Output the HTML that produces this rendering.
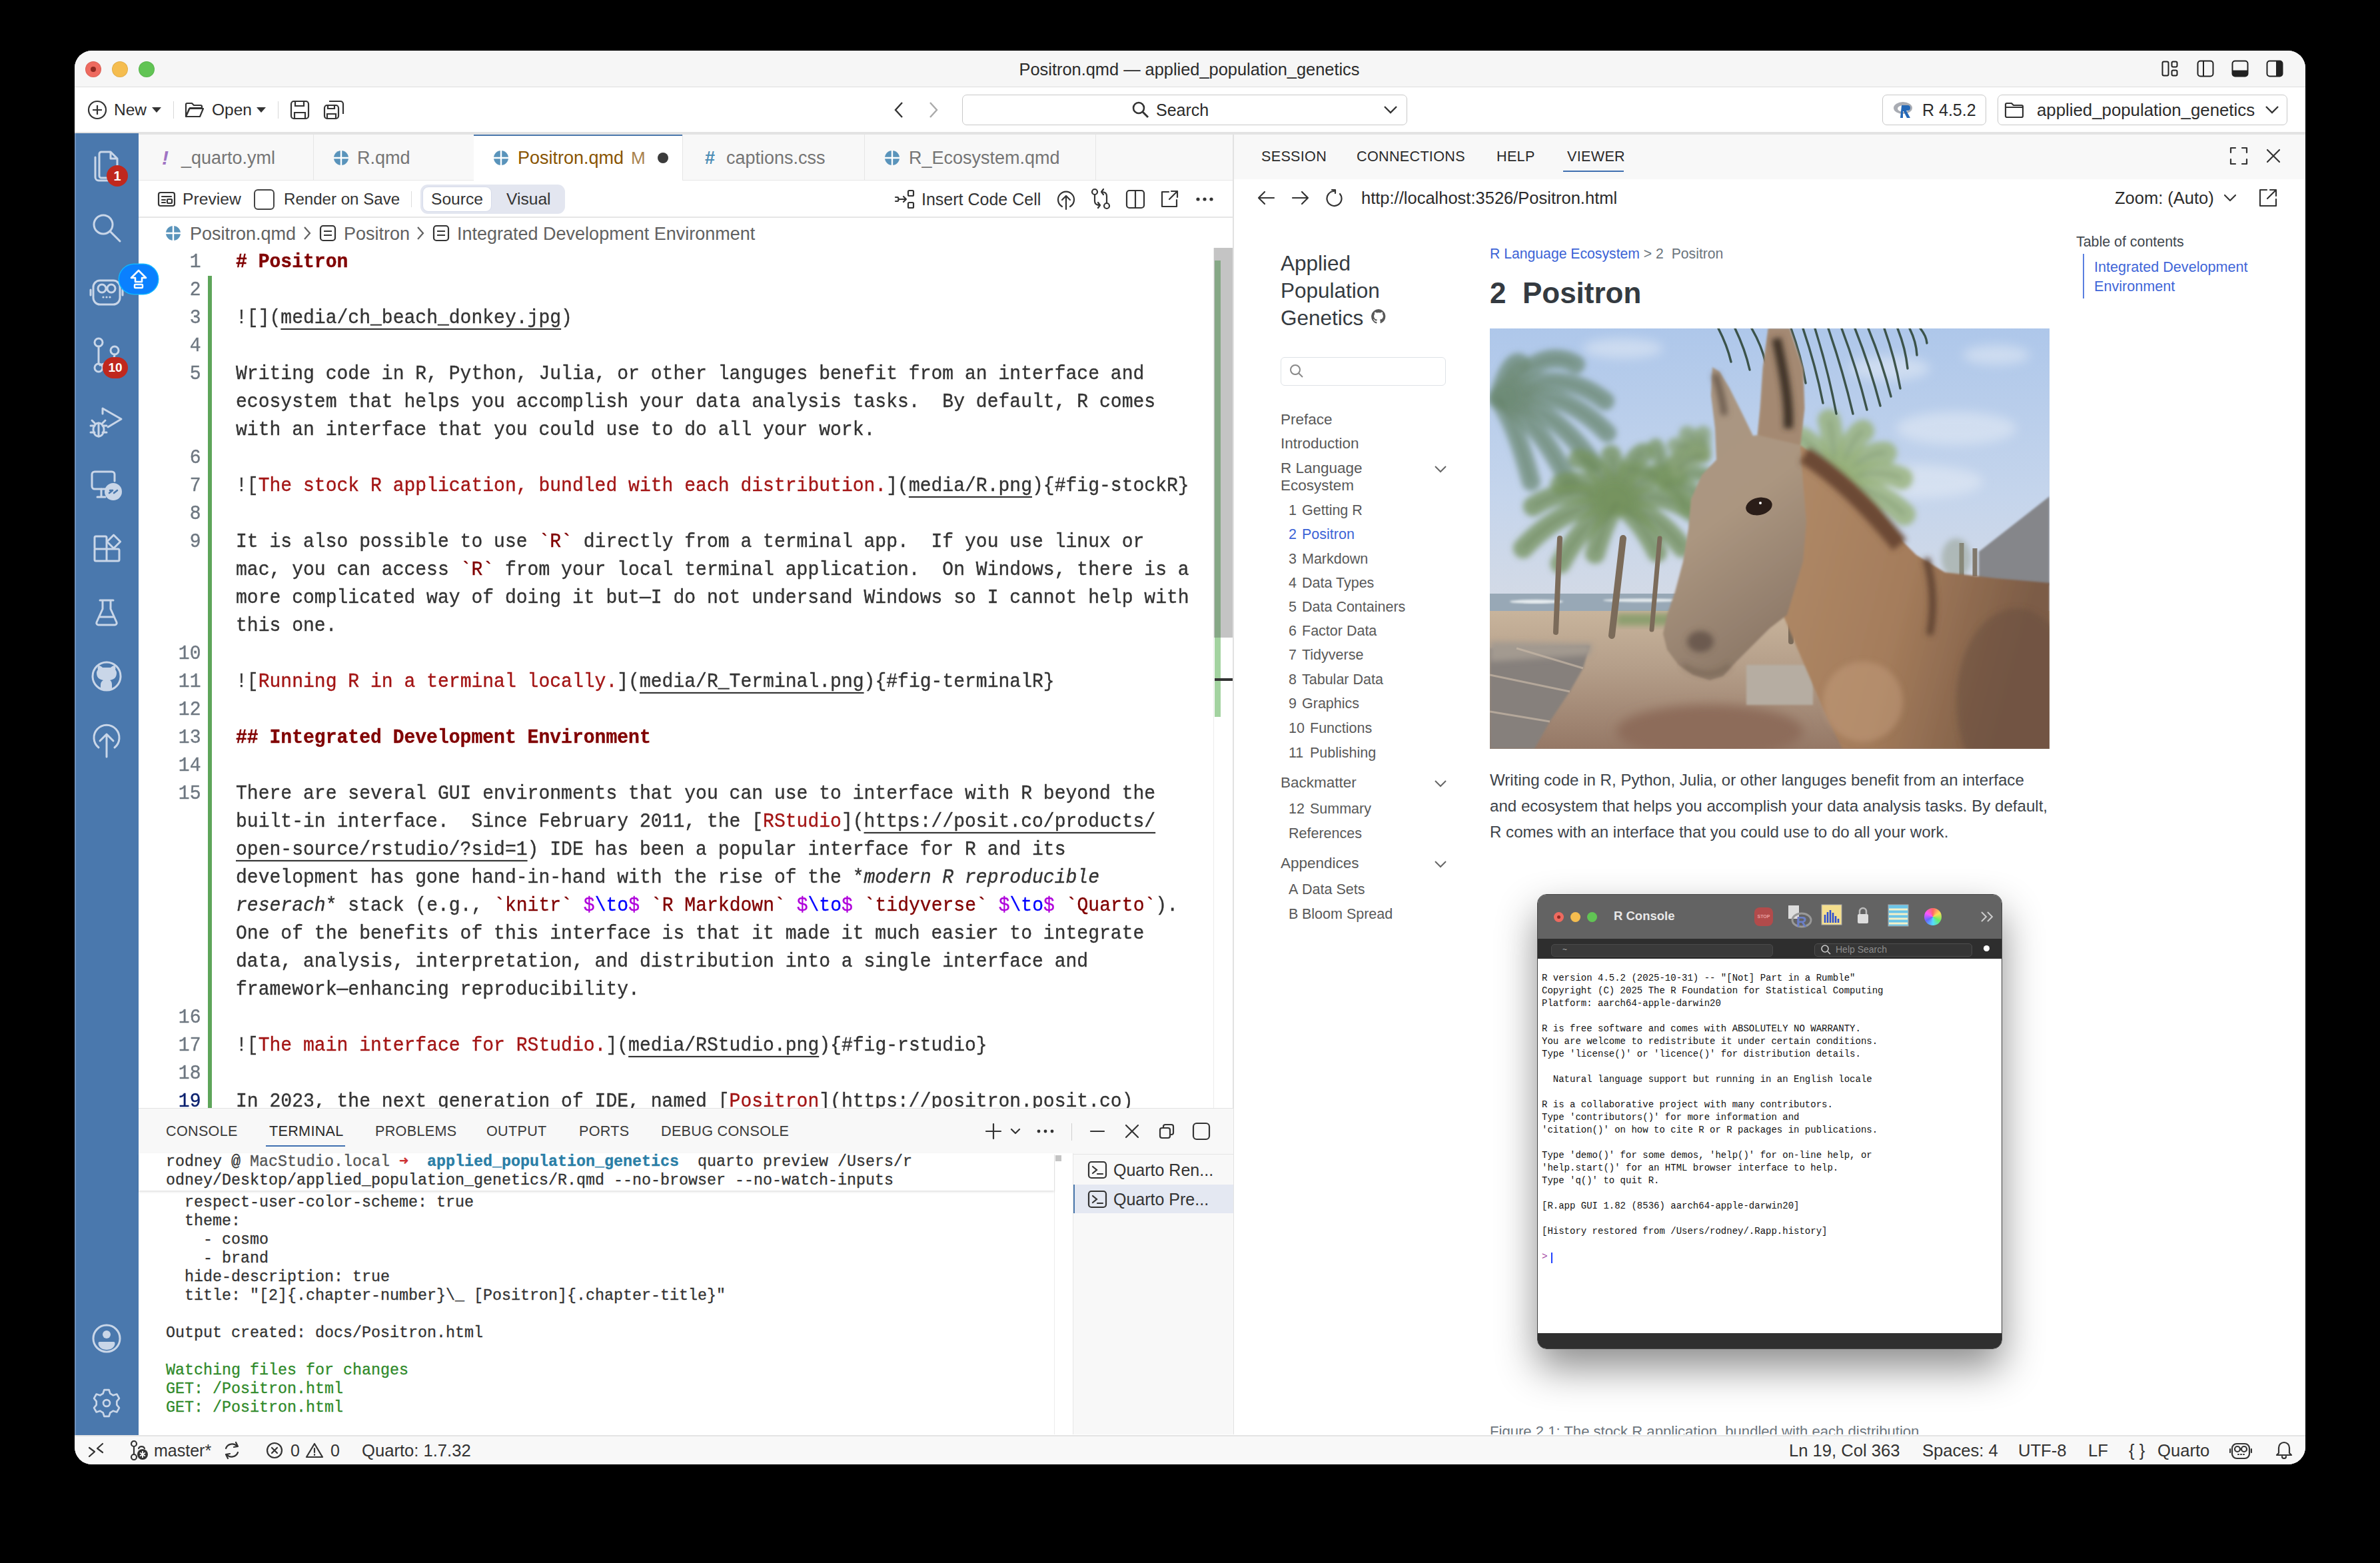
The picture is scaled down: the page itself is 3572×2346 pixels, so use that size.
<!DOCTYPE html>
<html><head><meta charset="utf-8"><title>Positron</title><style>
*{box-sizing:content-box}
html,body{margin:0;padding:0;background:#000;width:3572px;height:2346px;overflow:hidden}
.a{position:absolute}
.t{position:absolute;white-space:pre;font-family:'Liberation Sans',sans-serif}
#win{position:absolute;left:112px;top:76px;width:3348px;height:2122px;border-radius:26px;overflow:hidden;background:#fff}
#inner{position:absolute;left:-112px;top:-76px;width:3572px;height:2346px}
.code{position:absolute;white-space:pre;font-family:'Liberation Mono',monospace;font-size:28.05px;line-height:37px;color:#333;transform-origin:0 60%;transform:scaleY(1.08);-webkit-text-stroke:0.35px currentColor}
.ln{left:0;width:93.5px;text-align:right}
.term{position:absolute;white-space:pre;font-family:'Liberation Mono',monospace;font-size:23.33px;line-height:28px;color:#333;-webkit-text-stroke:0.3px currentColor}
</style></head>
<body><div id="win"><div id="inner"><div class="a" style="left:112px;top:76px;width:3348px;height:55px;background:#f6f6f6;"></div><div class="a" style="left:112px;top:130px;width:3348px;height:1px;background:#dedede;"></div><div class="a" style="left:128px;top:92px;width:24px;height:24px;border-radius:50%;background:#ee6a5f;box-shadow:inset 0 0 0 1px rgba(0,0,0,0.08)"></div><div class="a" style="left:168px;top:92px;width:24px;height:24px;border-radius:50%;background:#f5bd4f;box-shadow:inset 0 0 0 1px rgba(0,0,0,0.08)"></div><div class="a" style="left:208px;top:92px;width:24px;height:24px;border-radius:50%;background:#61c454;box-shadow:inset 0 0 0 1px rgba(0,0,0,0.08)"></div><div class="a" style="left:136px;top:100px;width:8px;height:8px;border-radius:50%;background:#8f2a22"></div><div class="t" style="left:1335.0px;width:900px;text-align:center;top:84.0px;line-height:40px;font-size:25.4px;color:#2b2b2b;font-weight:400;">Positron.qmd — applied_population_genetics</div><svg class="a" style="left:3244.0px;top:90.0px;" width="26" height="26" viewBox="0 0 26 26" fill="none"><rect x="1.5" y="2.5" width="9" height="21" rx="2.2" stroke="#222" stroke-width="2"/><rect x="15.5" y="2.5" width="8" height="8" rx="2" stroke="#222" stroke-width="2"/><rect x="15.5" y="15.5" width="8" height="8" rx="2" stroke="#222" stroke-width="2"/></svg><svg class="a" style="left:3296.5px;top:90.0px;" width="26" height="26" viewBox="0 0 26 26" fill="none"><rect x="1.5" y="1.5" width="23" height="23" rx="4" stroke="#222" stroke-width="2"/><line x1="10" y1="1.5" x2="10" y2="24.5" stroke="#222" stroke-width="2"/></svg><svg class="a" style="left:3349.0px;top:90.0px;" width="26" height="26" viewBox="0 0 26 26" fill="none"><rect x="1.5" y="1.5" width="23" height="23" rx="4" stroke="#222" stroke-width="2"/><path d="M1.5 15.5h23v5a4 4 0 0 1-4 4h-15a4 4 0 0 1-4-4z" fill="#222"/></svg><svg class="a" style="left:3401.0px;top:90.0px;" width="26" height="26" viewBox="0 0 26 26" fill="none"><rect x="1.5" y="1.5" width="23" height="23" rx="4" stroke="#222" stroke-width="2"/><path d="M15 1.5h5.5a4 4 0 0 1 4 4v15a4 4 0 0 1-4 4H15z" fill="#222"/></svg><div class="a" style="left:112px;top:131px;width:3348px;height:67px;background:#ffffff;"></div><div class="a" style="left:112px;top:198px;width:3348px;height:4px;background:#e3e3e3;"></div><svg class="a" style="left:131.0px;top:150.0px;" width="30" height="30" viewBox="0 0 30 30" fill="none"><circle cx="15" cy="15" r="13" stroke="#333" stroke-width="2.2"/><path d="M15 8v14M8 15h14" stroke="#333" stroke-width="2.2"/></svg><div class="t" style="left:171px;top:145.0px;line-height:40px;font-size:24.5px;color:#2b2b2b;font-weight:400;font-family:'Liberation Sans',sans-serif;">New</div><svg class="a" style="left:228.0px;top:161.0px;" width="14" height="8" viewBox="0 0 14 8" fill="none"><path d="M0 0h14L7 8z" fill="#333"/></svg><div class="a" style="left:260px;top:152px;width:1px;height:26px;background:#d8d8d8;"></div><svg class="a" style="left:277.0px;top:152.0px;" width="30" height="26" viewBox="0 0 30 26" fill="none"><path d="M2 5a2 2 0 0 1 2-2h7l3 3h10a2 2 0 0 1 2 2v2H8L2 23z M2 23l5-12h21l-5 12z" stroke="#333" stroke-width="2.2" stroke-linejoin="round"/></svg><div class="t" style="left:318px;top:145.0px;line-height:40px;font-size:24.5px;color:#2b2b2b;font-weight:400;font-family:'Liberation Sans',sans-serif;">Open</div><svg class="a" style="left:385.0px;top:161.0px;" width="14" height="8" viewBox="0 0 14 8" fill="none"><path d="M0 0h14L7 8z" fill="#333"/></svg><div class="a" style="left:417px;top:152px;width:1px;height:26px;background:#d8d8d8;"></div><svg class="a" style="left:435.0px;top:150.0px;" width="30" height="30" viewBox="0 0 30 30" fill="none"><rect x="2" y="2" width="26" height="26" rx="4" stroke="#333" stroke-width="2.2"/><path d="M8 2v7h13V2M7 28v-9h16v9" stroke="#333" stroke-width="2.2"/></svg><svg class="a" style="left:485.0px;top:150.0px;" width="32" height="30" viewBox="0 0 32 30" fill="none"><rect x="2" y="8" width="21" height="20" rx="4" stroke="#333" stroke-width="2.2"/><path d="M7 8v5h10V8M6 28v-7h13v7M9 2h17a4 4 0 0 1 4 4v15" stroke="#333" stroke-width="2.2"/></svg><svg class="a" style="left:1341.0px;top:152.0px;" width="16" height="26" viewBox="0 0 16 26" fill="none"><path d="M13 2L3 13l10 11" stroke="#333" stroke-width="2.4"/></svg><svg class="a" style="left:1393.0px;top:152.0px;" width="16" height="26" viewBox="0 0 16 26" fill="none"><path d="M3 2l10 11L3 24" stroke="#aaa" stroke-width="2.4"/></svg><div class="a" style="left:1444px;top:142px;width:666px;height:44px;border:1.5px solid #c8c8c8;border-radius:7px;background:#fff"></div><svg class="a" style="left:1699.0px;top:152.0px;" width="26" height="26" viewBox="0 0 26 26" fill="none"><circle cx="10" cy="10" r="8" stroke="#333" stroke-width="2.6"/><path d="M16 16l8 8" stroke="#333" stroke-width="3"/></svg><div class="t" style="left:1735px;top:145.0px;line-height:40px;font-size:25px;color:#2b2b2b;font-weight:400;font-family:'Liberation Sans',sans-serif;">Search</div><svg class="a" style="left:2076.0px;top:158.0px;" width="22" height="14" viewBox="0 0 22 14" fill="none"><path d="M2 2l9 9 9-9" stroke="#333" stroke-width="2.4"/></svg><div class="a" style="left:2825px;top:142px;width:154px;height:44px;border:1.5px solid #c8c8c8;border-radius:7px;background:#fff"></div><svg class="a" style="left:2841.0px;top:151.0px;" width="34" height="28" viewBox="0 0 34 28" fill="none"><ellipse cx="15" cy="11" rx="14" ry="9" fill="#a9acb3"/><ellipse cx="16" cy="12" rx="9" ry="5" fill="#fff"/><path d="M13 7h9a4 4 0 0 1 0 8h-2l6 11h-5l-5-10h-1v10h-4z" fill="#2468b7"/></svg><div class="t" style="left:2885px;top:145.0px;line-height:40px;font-size:25px;color:#2b2b2b;font-weight:400;font-family:'Liberation Sans',sans-serif;">R 4.5.2</div><div class="a" style="left:2998px;top:142px;width:433px;height:44px;border:1.5px solid #c8c8c8;border-radius:7px;background:#fff"></div><svg class="a" style="left:3008.0px;top:152.0px;" width="30" height="26" viewBox="0 0 30 26" fill="none"><path d="M2 5a2 2 0 0 1 2-2h7l3 3h12a2 2 0 0 1 2 2v14a2 2 0 0 1-2 2H4a2 2 0 0 1-2-2z M2 9h26" stroke="#333" stroke-width="2.2" stroke-linejoin="round"/></svg><div class="t" style="left:3057px;top:145.0px;line-height:40px;font-size:25.8px;color:#2b2b2b;font-weight:400;font-family:'Liberation Sans',sans-serif;">applied_population_genetics</div><svg class="a" style="left:3399.0px;top:158.0px;" width="22" height="14" viewBox="0 0 22 14" fill="none"><path d="M2 2l9 9 9-9" stroke="#333" stroke-width="2.4"/></svg><div class="a" style="left:112px;top:200px;width:96px;height:1954px;background:#4a78ad;"></div><div class="a" style="left:112px;top:200px;width:2px;height:1954px;background:#6f93c0;"></div><svg class="a" style="left:136.0px;top:220.0px;" width="48" height="56" viewBox="0 0 48 56" fill="none"><path d="M16 8h14l10 10v26a3 3 0 0 1-3 3H16a3 3 0 0 1-3-3V11a3 3 0 0 1 3-3z M30 8v10h10" stroke="#c9d6e8" stroke-width="3" stroke-linecap="round" stroke-linejoin="round"/><path d="M7 16v30a5 5 0 0 0 5 5h22" stroke="#c9d6e8" stroke-width="3" stroke-linecap="round" stroke-linejoin="round"/></svg><div class="a" style="left:160px;top:248px;width:32px;height:32px;border-radius:50%;background:#c0281e;color:#fff;font:700 20px/32px 'Liberation Sans';text-align:center">1</div><svg class="a" style="left:136.0px;top:318.0px;" width="48" height="48" viewBox="0 0 48 48" fill="none"><circle cx="19" cy="19" r="14" stroke="#c9d6e8" stroke-width="3" stroke-linecap="round" stroke-linejoin="round"/><path d="M29 29l15 15" stroke="#c9d6e8" stroke-width="3" stroke-linecap="round" stroke-linejoin="round"/></svg><svg class="a" style="left:133.0px;top:415.0px;" width="54" height="46" viewBox="0 0 54 46" fill="none"><rect x="7" y="6" width="40" height="36" rx="10" stroke="#c9d6e8" stroke-width="3" stroke-linecap="round" stroke-linejoin="round"/><circle cx="20" cy="18" r="6" stroke="#c9d6e8" stroke-width="3" stroke-linecap="round" stroke-linejoin="round"/><circle cx="34" cy="18" r="6" stroke="#c9d6e8" stroke-width="3" stroke-linecap="round" stroke-linejoin="round"/><path d="M3 20v8M51 20v8" stroke="#c9d6e8" stroke-width="3" stroke-linecap="round" stroke-linejoin="round"/><circle cx="22" cy="31" r="1.6" fill="#c9d6e8"/><circle cx="27" cy="31" r="1.6" fill="#c9d6e8"/><circle cx="32" cy="31" r="1.6" fill="#c9d6e8"/></svg><svg class="a" style="left:136.0px;top:506.0px;" width="48" height="56" viewBox="0 0 48 56" fill="none"><circle cx="12" cy="8" r="6" stroke="#c9d6e8" stroke-width="3" stroke-linecap="round" stroke-linejoin="round"/><circle cx="36" cy="20" r="6" stroke="#c9d6e8" stroke-width="3" stroke-linecap="round" stroke-linejoin="round"/><circle cx="12" cy="46" r="6" stroke="#c9d6e8" stroke-width="3" stroke-linecap="round" stroke-linejoin="round"/><path d="M12 14v26M36 26c0 10-10 12-22 16" stroke="#c9d6e8" stroke-width="3" stroke-linecap="round" stroke-linejoin="round"/></svg><div class="a" style="left:154px;top:536px;width:38px;height:32px;border-radius:16px;background:#c0281e;color:#fff;font:700 19px/32px 'Liberation Sans';text-align:center">10</div><svg class="a" style="left:132.0px;top:607.0px;" width="56" height="56" viewBox="0 0 56 56" fill="none"><path d="M22 14V6l28 16-20 12" stroke="#c9d6e8" stroke-width="3" stroke-linecap="round" stroke-linejoin="round"/><ellipse cx="16" cy="38" rx="8" ry="10" stroke="#c9d6e8" stroke-width="3" stroke-linecap="round" stroke-linejoin="round"/><path d="M4 32h6M4 42h6M22 32h6M22 42h6M16 28v20M10 28l-4-4M22 28l4-4" stroke="#c9d6e8" stroke-width="3" stroke-linecap="round" stroke-linejoin="round"/></svg><svg class="a" style="left:132.0px;top:700.0px;" width="56" height="56" viewBox="0 0 56 56" fill="none"><path d="M34 34H10a4 4 0 0 1-4-4V12a4 4 0 0 1 4-4h26a4 4 0 0 1 4 4v10" stroke="#c9d6e8" stroke-width="3" stroke-linecap="round" stroke-linejoin="round"/><path d="M14 46h12M20 34v12" stroke="#c9d6e8" stroke-width="3" stroke-linecap="round" stroke-linejoin="round"/><circle cx="38" cy="38" r="13" fill="#c9d6e8"/><path d="M32 40l5-4M44 36l-5 4M33 36l3 0" stroke="#4a78ad" stroke-width="2.6" stroke-linecap="round"/></svg><svg class="a" style="left:134.0px;top:796.0px;" width="52" height="52" viewBox="0 0 52 52" fill="none"><path d="M10 9h14a2 2 0 0 1 2 2v17H10a2 2 0 0 1-2-2V11a2 2 0 0 1 2-2zM8 28h18v18H10a2 2 0 0 1-2-2zM26 28h17a2 2 0 0 1 2 2v14a2 2 0 0 1-2 2H26z" stroke="#c9d6e8" stroke-width="3" stroke-linecap="round" stroke-linejoin="round"/><path d="M36.6 7l10 10-10 10-10-10z" stroke="#c9d6e8" stroke-width="3" stroke-linecap="round" stroke-linejoin="round"/></svg><svg class="a" style="left:140.0px;top:897.5px;" width="40" height="44" viewBox="0 0 40 44" fill="none"><path d="M10 3h20M14 3v13L5 36a3 3 0 0 0 3 4h24a3 3 0 0 0 3-4L26 16V3M9 28h22" stroke="#c9d6e8" stroke-width="3" stroke-linecap="round" stroke-linejoin="round"/></svg><svg class="a" style="left:132.0px;top:987.0px;" width="56" height="56" viewBox="0 0 56 56" fill="none"><circle cx="28" cy="28" r="21" stroke="#c9d6e8" stroke-width="3" stroke-linecap="round" stroke-linejoin="round"/><path d="M19 41c0-4 2-6 4-7-6-1-10-4-10-11 0-2 1-4 2-5-1-2 0-5 1-6 2 0 4 1 6 3h12c2-2 4-3 6-3 1 1 2 4 1 6 1 1 2 3 2 5 0 7-4 10-10 11 2 1 3 3 3 7v7H19z" fill="#c9d6e8"/></svg><svg class="a" style="left:132.0px;top:1080.0px;" width="56" height="60" viewBox="0 0 56 60" fill="none"><path d="M16 42A19 19 0 1 1 40 42" stroke="#c9d6e8" stroke-width="3" stroke-linecap="round" stroke-linejoin="round"/><path d="M28 56V22M18 32l10-10 10 10" stroke="#c9d6e8" stroke-width="3" stroke-linecap="round" stroke-linejoin="round"/></svg><svg class="a" style="left:132.0px;top:1981.0px;" width="56" height="56" viewBox="0 0 56 56" fill="none"><circle cx="28" cy="28" r="20" stroke="#c9d6e8" stroke-width="3" stroke-linecap="round" stroke-linejoin="round"/><circle cx="28" cy="22" r="6" fill="#c9d6e8"/><path d="M17.5 33h21a2 2 0 0 1 2 2c0 6-5.5 10-12.5 10s-12.5-4-12.5-10a2 2 0 0 1 2-2z" fill="#c9d6e8"/></svg><svg class="a" style="left:132.0px;top:2078.0px;" width="56" height="56" viewBox="0 0 56 56" fill="none"><g transform="translate(28 28) scale(0.9) translate(-28 -28)"><path d="M24 6h8l2 6 5 3 6-2 4 7-4 5v6l4 5-4 7-6-2-5 3-2 6h-8l-2-6-5-3-6 2-4-7 4-5v-6l-4-5 4-7 6 2 5-3z" stroke="#c9d6e8" stroke-width="3" stroke-linecap="round" stroke-linejoin="round"/><circle cx="28" cy="28" r="5.5" stroke="#c9d6e8" stroke-width="3" stroke-linecap="round" stroke-linejoin="round"/></g></svg><div class="a" style="left:112px;top:2154px;width:3348px;height:45px;background:#f8f8f8;"></div><div class="a" style="left:112px;top:2154px;width:3348px;height:2px;background:#e4e4e4;"></div><svg class="a" style="left:131.0px;top:2164.0px;" width="26" height="26" viewBox="0 0 26 26" fill="none"><path d="M3 22l8-7-8-6M23 3l-8 7 8 6" stroke="#333" stroke-width="2.2" stroke-linecap="round" stroke-linejoin="round"/></svg><svg class="a" style="left:194.0px;top:2162.0px;" width="30" height="30" viewBox="0 0 30 30" fill="none"><circle cx="7" cy="5" r="4" stroke="#333" stroke-width="2.2" stroke-linecap="round" stroke-linejoin="round"/><circle cx="7" cy="25" r="4" stroke="#333" stroke-width="2.2" stroke-linecap="round" stroke-linejoin="round"/><path d="M7 9v12" stroke="#333" stroke-width="2.2" stroke-linecap="round" stroke-linejoin="round"/><path d="M14 12a5 5 0 0 1 9 0" stroke="#333" stroke-width="2.2" stroke-linecap="round" stroke-linejoin="round"/><circle cx="20" cy="21" r="8" fill="#333"/><path d="M20 16v10M16 18.5l8 5M24 18.5l-8 5" stroke="#fff" stroke-width="1.8"/></svg><div class="t" style="left:231px;top:2157.0px;line-height:40px;font-size:25px;color:#333;font-weight:400;font-family:'Liberation Sans',sans-serif;">master*</div><svg class="a" style="left:334.0px;top:2162.0px;" width="28" height="30" viewBox="0 0 28 30" fill="none"><path d="M22 9A10 10 0 0 0 5 12M6 21a10 10 0 0 0 17-3" stroke="#333" stroke-width="2.2" stroke-linecap="round" stroke-linejoin="round"/><path d="M20 3l3 6-6 1M8 27l-3-6 6-1" stroke="#333" stroke-width="2.2" stroke-linecap="round" stroke-linejoin="round"/></svg><svg class="a" style="left:399.0px;top:2164.0px;" width="26" height="26" viewBox="0 0 26 26" fill="none"><circle cx="13" cy="13" r="11" stroke="#333" stroke-width="2.2" stroke-linecap="round" stroke-linejoin="round"/><path d="M9 9l8 8M17 9l-8 8" stroke="#333" stroke-width="2.2" stroke-linecap="round" stroke-linejoin="round"/></svg><div class="t" style="left:436px;top:2157.0px;line-height:40px;font-size:25px;color:#333;font-weight:400;font-family:'Liberation Sans',sans-serif;">0</div><svg class="a" style="left:458.0px;top:2164.0px;" width="28" height="26" viewBox="0 0 28 26" fill="none"><path d="M14 3L2 23h24z" stroke="#333" stroke-width="2.2" stroke-linecap="round" stroke-linejoin="round"/><path d="M14 10v6M14 19v1" stroke="#333" stroke-width="2.2" stroke-linecap="round" stroke-linejoin="round"/></svg><div class="t" style="left:496px;top:2157.0px;line-height:40px;font-size:25px;color:#333;font-weight:400;font-family:'Liberation Sans',sans-serif;">0</div><div class="t" style="left:543px;top:2157.0px;line-height:40px;font-size:25.6px;color:#333;font-weight:400;font-family:'Liberation Sans',sans-serif;">Quarto: 1.7.32</div><div class="t" style="left:2685px;top:2157.0px;line-height:40px;font-size:25.6px;color:#333;font-weight:400;font-family:'Liberation Sans',sans-serif;">Ln 19, Col 363</div><div class="t" style="left:2885px;top:2157.0px;line-height:40px;font-size:25.6px;color:#333;font-weight:400;font-family:'Liberation Sans',sans-serif;">Spaces: 4</div><div class="t" style="left:3029px;top:2157.0px;line-height:40px;font-size:25.6px;color:#333;font-weight:400;font-family:'Liberation Sans',sans-serif;">UTF-8</div><div class="t" style="left:3134px;top:2157.0px;line-height:40px;font-size:25.6px;color:#333;font-weight:400;font-family:'Liberation Sans',sans-serif;">LF</div><div class="t" style="left:3195px;top:2157.0px;line-height:40px;font-size:25.6px;color:#333;font-weight:400;font-family:'Liberation Sans',sans-serif;">{ }</div><div class="t" style="left:3238px;top:2157.0px;line-height:40px;font-size:25.6px;color:#333;font-weight:400;font-family:'Liberation Sans',sans-serif;">Quarto</div><svg class="a" style="left:3346.0px;top:2162.0px;" width="34" height="30" viewBox="0 0 34 30" fill="none"><rect x="4" y="5" width="26" height="22" rx="7" stroke="#333" stroke-width="2.2" stroke-linecap="round" stroke-linejoin="round"/><circle cx="12" cy="13" r="4" stroke="#333" stroke-width="2.2" stroke-linecap="round" stroke-linejoin="round"/><circle cx="22" cy="13" r="4" stroke="#333" stroke-width="2.2" stroke-linecap="round" stroke-linejoin="round"/><path d="M1 13v5M33 13v5M13 21h1M17 21h1M21 21h1" stroke="#333" stroke-width="2.2" stroke-linecap="round" stroke-linejoin="round"/></svg><svg class="a" style="left:3414.0px;top:2160.0px;" width="28" height="30" viewBox="0 0 28 30" fill="none"><path d="M6 21V13a8 8 0 0 1 16 0v8l3 3H3z M11 26a3 3 0 0 0 6 0" stroke="#333" stroke-width="2.2" stroke-linecap="round" stroke-linejoin="round"/></svg><div class="a" style="left:208px;top:202px;width:1643px;height:69px;background:#f8f8f8;"></div><div class="a" style="left:208px;top:270px;width:1643px;height:1px;background:#e6e6e6;"></div><div class="a" style="left:470px;top:202px;width:1px;height:69px;background:#e6e6e6;"></div><div class="a" style="left:711px;top:202px;width:1px;height:69px;background:#e6e6e6;"></div><div class="a" style="left:1024px;top:202px;width:1px;height:69px;background:#e6e6e6;"></div><div class="a" style="left:1297px;top:202px;width:1px;height:69px;background:#e6e6e6;"></div><div class="a" style="left:1644px;top:202px;width:1px;height:69px;background:#e6e6e6;"></div><div class="t" style="left:243px;top:217.0px;line-height:40px;font-size:30px;color:#a074c4;font-weight:700;font-family:'Liberation Sans',sans-serif;font-style:italic">!</div><div class="t" style="left:272px;top:217.0px;line-height:40px;font-size:27px;color:#757575;font-weight:400;font-family:'Liberation Sans',sans-serif;">_quarto.yml</div><svg class="a" style="left:500.0px;top:225.0px;" width="24" height="24" viewBox="0 0 24 24" fill="none"><circle cx="12" cy="12" r="11" fill="#5a94bb"/><path d="M12 1v22M1 12h22" stroke="#fff" stroke-width="2.4"/></svg><div class="t" style="left:536px;top:217.0px;line-height:40px;font-size:27px;color:#757575;font-weight:400;font-family:'Liberation Sans',sans-serif;">R.qmd</div><div class="a" style="left:711px;top:202px;width:313px;height:69px;background:#ffffff;"></div><div class="a" style="left:711px;top:202px;width:313px;height:2px;background:#4a78ad;"></div><svg class="a" style="left:740.0px;top:225.0px;" width="24" height="24" viewBox="0 0 24 24" fill="none"><circle cx="12" cy="12" r="11" fill="#5a94bb"/><path d="M12 1v22M1 12h22" stroke="#fff" stroke-width="2.4"/></svg><div class="t" style="left:777px;top:217.0px;line-height:40px;font-size:27px;color:#895503;font-weight:400;font-family:'Liberation Sans',sans-serif;">Positron.qmd</div><div class="t" style="left:947px;top:217.0px;line-height:40px;font-size:26px;color:#a8814d;font-weight:400;font-family:'Liberation Sans',sans-serif;">M</div><div class="a" style="left:987px;top:229px;width:16px;height:16px;border-radius:50%;background:#3b3b3b"></div><div class="t" style="left:1058px;top:217.0px;line-height:40px;font-size:27px;color:#4d8db5;font-weight:700;font-family:'Liberation Sans',sans-serif;">#</div><div class="t" style="left:1090px;top:217.0px;line-height:40px;font-size:27px;color:#757575;font-weight:400;font-family:'Liberation Sans',sans-serif;">captions.css</div><svg class="a" style="left:1327.0px;top:225.0px;" width="24" height="24" viewBox="0 0 24 24" fill="none"><circle cx="12" cy="12" r="11" fill="#5a94bb"/><path d="M12 1v22M1 12h22" stroke="#fff" stroke-width="2.4"/></svg><div class="t" style="left:1364px;top:217.0px;line-height:40px;font-size:27px;color:#757575;font-weight:400;font-family:'Liberation Sans',sans-serif;">R_Ecosystem.qmd</div><div class="a" style="left:208px;top:271px;width:1643px;height:55px;background:#ffffff;"></div><div class="a" style="left:208px;top:325px;width:1642px;height:2px;background:#e6e6e6;"></div><svg class="a" style="left:236.0px;top:286.0px;" width="28" height="26" viewBox="0 0 28 26" fill="none"><rect x="2" y="3" width="24" height="20" rx="3" stroke="#333" stroke-width="2.2" stroke-linecap="round" stroke-linejoin="round"/><path d="M7 9h14M7 14h5M7 18h5" stroke="#333" stroke-width="2.2" stroke-linecap="round" stroke-linejoin="round"/><rect x="15" y="13" width="7" height="6" rx="1" stroke="#333" stroke-width="2.2" stroke-linecap="round" stroke-linejoin="round"/></svg><div class="t" style="left:274px;top:279.0px;line-height:40px;font-size:24.7px;color:#333;font-weight:400;font-family:'Liberation Sans',sans-serif;">Preview</div><div class="a" style="left:381px;top:284px;width:27px;height:27px;border:2px solid #444;border-radius:6px"></div><div class="t" style="left:426px;top:279.0px;line-height:40px;font-size:24.1px;color:#333;font-weight:400;font-family:'Liberation Sans',sans-serif;">Render on Save</div><div class="a" style="left:617px;top:287px;width:1px;height:24px;background:#dddddd;"></div><div class="a" style="left:631px;top:277px;width:217px;height:44px;border-radius:11px;background:#e3e6f0"></div><div class="a" style="left:634px;top:280px;width:102px;height:36px;border-radius:9px;background:#fff;border:1px solid #d6dbea"></div><div class="t" style="left:647px;top:279.0px;line-height:40px;font-size:24.6px;color:#333;font-weight:400;font-family:'Liberation Sans',sans-serif;">Source</div><div class="t" style="left:760px;top:279.0px;line-height:40px;font-size:24.6px;color:#333;font-weight:400;font-family:'Liberation Sans',sans-serif;">Visual</div><svg class="a" style="left:1342.0px;top:284.0px;" width="32" height="30" viewBox="0 0 32 30" fill="none"><path d="M2 12h3c2 0 2 6 0 6H2M6 15h12M14 11l4 4-4 4" stroke="#333" stroke-width="2.2" stroke-linecap="round" stroke-linejoin="round"/><rect x="21" y="2" width="8" height="8" rx="1.5" stroke="#333" stroke-width="2.2" stroke-linecap="round" stroke-linejoin="round"/><rect x="21" y="20" width="8" height="8" rx="1.5" stroke="#333" stroke-width="2.2" stroke-linecap="round" stroke-linejoin="round"/></svg><div class="t" style="left:1383px;top:279.0px;line-height:40px;font-size:25px;color:#333;font-weight:400;font-family:'Liberation Sans',sans-serif;">Insert Code Cell</div><svg class="a" style="left:1585.0px;top:282.0px;" width="30" height="34" viewBox="0 0 30 34" fill="none"><path d="M9 28A12 12 0 1 1 21 28" stroke="#333" stroke-width="2.2" stroke-linecap="round" stroke-linejoin="round" stroke-width="2.6"/><path d="M15 32V12M9 18l6-6 6 6" stroke="#333" stroke-width="2.2" stroke-linecap="round" stroke-linejoin="round" stroke-width="2.6"/></svg><svg class="a" style="left:1637.0px;top:282.0px;" width="30" height="34" viewBox="0 0 30 34" fill="none"><circle cx="6" cy="6" r="4" stroke="#333" stroke-width="2.2" stroke-linecap="round" stroke-linejoin="round"/><circle cx="24" cy="27" r="4" stroke="#333" stroke-width="2.2" stroke-linecap="round" stroke-linejoin="round"/><path d="M6 10v10c0 4 3 6 8 6M11 22l3 4-3 4M24 23V12c0-4-3-6-8-6M19 10l-3-4 3-4" stroke="#333" stroke-width="2.2" stroke-linecap="round" stroke-linejoin="round"/></svg><svg class="a" style="left:1689.0px;top:284.0px;" width="30" height="30" viewBox="0 0 30 30" fill="none"><rect x="2" y="2" width="26" height="26" rx="4" stroke="#333" stroke-width="2.2" stroke-linecap="round" stroke-linejoin="round"/><path d="M15 2v26" stroke="#333" stroke-width="2.2" stroke-linecap="round" stroke-linejoin="round"/></svg><svg class="a" style="left:1741.0px;top:284.0px;" width="30" height="30" viewBox="0 0 30 30" fill="none"><path d="M13 4H3v22h22V16M17 3h9v9M26 3L14 15" stroke="#333" stroke-width="2.2" stroke-linecap="round" stroke-linejoin="round"/></svg><svg class="a" style="left:1795.0px;top:295.0px;" width="26" height="8" viewBox="0 0 26 8" fill="none"><circle cx="3" cy="4" r="2.6" fill="#333"/><circle cx="13" cy="4" r="2.6" fill="#333"/><circle cx="23" cy="4" r="2.6" fill="#333"/></svg><div class="a" style="left:208px;top:327px;width:1614px;height:1336px;background:#ffffff;"></div><svg class="a" style="left:248.0px;top:338.0px;" width="24" height="24" viewBox="0 0 24 24" fill="none"><circle cx="12" cy="12" r="11" fill="#5a94bb"/><path d="M12 1v22M1 12h22" stroke="#fff" stroke-width="2.4"/></svg><div class="t" style="left:285px;top:331.0px;line-height:40px;font-size:27px;color:#616161;font-weight:400;font-family:'Liberation Sans',sans-serif;">Positron.qmd</div><svg class="a" style="left:455.0px;top:339.0px;" width="12" height="22" viewBox="0 0 12 22" fill="none"><path d="M2 2l8 9-8 9" stroke="#616161" stroke-width="2.2"/></svg><svg class="a" style="left:479.0px;top:337.0px;" width="26" height="26" viewBox="0 0 26 26" fill="none"><rect x="2" y="2" width="22" height="22" rx="4" stroke="#333" stroke-width="2.2"/><path d="M7 10h12M7 16h12" stroke="#333" stroke-width="2.2"/></svg><div class="t" style="left:516px;top:331.0px;line-height:40px;font-size:27px;color:#616161;font-weight:400;font-family:'Liberation Sans',sans-serif;">Positron</div><svg class="a" style="left:625.0px;top:339.0px;" width="12" height="22" viewBox="0 0 12 22" fill="none"><path d="M2 2l8 9-8 9" stroke="#616161" stroke-width="2.2"/></svg><svg class="a" style="left:649.0px;top:337.0px;" width="26" height="26" viewBox="0 0 26 26" fill="none"><rect x="2" y="2" width="22" height="22" rx="4" stroke="#333" stroke-width="2.2"/><path d="M7 10h12M7 16h12" stroke="#333" stroke-width="2.2"/></svg><div class="t" style="left:686px;top:331.0px;line-height:40px;font-size:27px;color:#616161;font-weight:400;font-family:'Liberation Sans',sans-serif;">Integrated Development Environment</div><div class="a" style="left:208px;top:372px;width:1614px;height:1291px;overflow:hidden"><div class="code ln" style="top:3px;color:#6e7781">1</div><div class="code" style="left:146px;top:3px"><span style="color:#800000;font-weight:700"># Positron</span></div><div class="code ln" style="top:45px;color:#6e7781">2</div><div class="code ln" style="top:87px;color:#6e7781">3</div><div class="code" style="left:146px;top:87px">![](<span style="text-decoration:underline;text-underline-offset:7px;text-decoration-thickness:2px">media/ch_beach_donkey.jpg</span>)</div><div class="code ln" style="top:129px;color:#6e7781">4</div><div class="code ln" style="top:171px;color:#6e7781">5</div><div class="code" style="left:146px;top:171px">Writing code in R, Python, Julia, or other languges benefit from an interface and</div><div class="code" style="left:146px;top:213px">ecosystem that helps you accomplish your data analysis tasks.  By default, R comes</div><div class="code" style="left:146px;top:255px">with an interface that you could use to do all your work.</div><div class="code ln" style="top:297px;color:#6e7781">6</div><div class="code ln" style="top:339px;color:#6e7781">7</div><div class="code" style="left:146px;top:339px">![<span style="color:#a31515">The stock R application, bundled with each distribution.</span>](<span style="text-decoration:underline;text-underline-offset:7px;text-decoration-thickness:2px">media/R.png</span>){#fig-stockR}</div><div class="code ln" style="top:381px;color:#6e7781">8</div><div class="code ln" style="top:423px;color:#6e7781">9</div><div class="code" style="left:146px;top:423px">It is also possible to use <span style="color:#800000">`R`</span> directly from a terminal app.  If you use linux or</div><div class="code" style="left:146px;top:465px">mac, you can access <span style="color:#800000">`R`</span> from your local terminal application.  On Windows, there is a</div><div class="code" style="left:146px;top:507px">more complicated way of doing it but—I do not undersand Windows so I cannot help with</div><div class="code" style="left:146px;top:549px">this one.</div><div class="code ln" style="top:591px;color:#6e7781">10</div><div class="code ln" style="top:633px;color:#6e7781">11</div><div class="code" style="left:146px;top:633px">![<span style="color:#a31515">Running R in a terminal locally.</span>](<span style="text-decoration:underline;text-underline-offset:7px;text-decoration-thickness:2px">media/R_Terminal.png</span>){#fig-terminalR}</div><div class="code ln" style="top:675px;color:#6e7781">12</div><div class="code ln" style="top:717px;color:#6e7781">13</div><div class="code" style="left:146px;top:717px"><span style="color:#800000;font-weight:700">## Integrated Development Environment</span></div><div class="code ln" style="top:759px;color:#6e7781">14</div><div class="code ln" style="top:801px;color:#6e7781">15</div><div class="code" style="left:146px;top:801px">There are several GUI environments that you can use to interface with R beyond the</div><div class="code" style="left:146px;top:843px">built-in interface.  Since February 2011, the [<span style="color:#a31515">RStudio</span>](<span style="text-decoration:underline;text-underline-offset:7px;text-decoration-thickness:2px">https://posit.co/products/</span></div><div class="code" style="left:146px;top:885px"><span style="text-decoration:underline;text-underline-offset:7px;text-decoration-thickness:2px">open-source/rstudio/?sid=1</span>) IDE has been a popular interface for R and its</div><div class="code" style="left:146px;top:927px">development has gone hand-in-hand with the rise of the *<span style="font-style:italic">modern R reproducible</span></div><div class="code" style="left:146px;top:969px"><span style="font-style:italic">reserach</span>* stack (e.g., <span style="color:#800000">`knitr`</span> <span style="color:#af00db">$</span><span style="color:#0000ff">\to</span><span style="color:#af00db">$</span> <span style="color:#800000">`R Markdown`</span> <span style="color:#af00db">$</span><span style="color:#0000ff">\to</span><span style="color:#af00db">$</span> <span style="color:#800000">`tidyverse`</span> <span style="color:#af00db">$</span><span style="color:#0000ff">\to</span><span style="color:#af00db">$</span> <span style="color:#800000">`Quarto`</span>).</div><div class="code" style="left:146px;top:1011px">One of the benefits of this interface is that it made it much easier to integrate</div><div class="code" style="left:146px;top:1053px">data, analysis, interpretation, and distribution into a single interface and</div><div class="code" style="left:146px;top:1095px">framework—enhancing reproducibility.</div><div class="code ln" style="top:1137px;color:#6e7781">16</div><div class="code ln" style="top:1179px;color:#6e7781">17</div><div class="code" style="left:146px;top:1179px">![<span style="color:#a31515">The main interface for RStudio.</span>](<span style="text-decoration:underline;text-underline-offset:7px;text-decoration-thickness:2px">media/RStudio.png</span>){#fig-rstudio}</div><div class="code ln" style="top:1221px;color:#6e7781">18</div><div class="code ln" style="top:1263px;color:#0b216f">19</div><div class="code" style="left:146px;top:1263px">In 2023, the next generation of IDE, named [<span style="color:#a31515">Positron</span>](https://positron.posit.co)</div></div><div class="a" style="left:312px;top:414px;width:6px;height:1249px;background:#5ea55a;"></div><div class="a" style="left:1821px;top:372px;width:1px;height:1291px;background:#ececec;"></div><div class="a" style="left:1822px;top:372px;width:29px;height:585px;background:#c4c4c4;"></div><div class="a" style="left:1823px;top:391px;width:9px;height:566px;background:#86a886;"></div><div class="a" style="left:1823px;top:957px;width:9px;height:119px;background:#a3d3a0;"></div><div class="a" style="left:1823px;top:1018px;width:28px;height:4px;background:#333333;"></div><div class="a" style="left:1850px;top:202px;width:2px;height:1951px;background:#e2e2e2;"></div><div class="a" style="left:208px;top:1663px;width:1643px;height:1px;background:#e2e2e2;"></div><div class="a" style="left:208px;top:1664px;width:1643px;height:67px;background:#f8f8f8;"></div><div class="t" style="left:249px;top:1678.3px;line-height:40px;font-size:21.6px;color:#3b3b3b;font-weight:400;font-family:'Liberation Sans',sans-serif;letter-spacing:0.3px">CONSOLE</div><div class="t" style="left:404px;top:1678.3px;line-height:40px;font-size:21.6px;color:#2b2b2b;font-weight:400;font-family:'Liberation Sans',sans-serif;letter-spacing:0.3px">TERMINAL</div><div class="t" style="left:563px;top:1678.3px;line-height:40px;font-size:21.6px;color:#3b3b3b;font-weight:400;font-family:'Liberation Sans',sans-serif;letter-spacing:0.3px">PROBLEMS</div><div class="t" style="left:730px;top:1678.3px;line-height:40px;font-size:21.6px;color:#3b3b3b;font-weight:400;font-family:'Liberation Sans',sans-serif;letter-spacing:0.3px">OUTPUT</div><div class="t" style="left:869px;top:1678.3px;line-height:40px;font-size:21.6px;color:#3b3b3b;font-weight:400;font-family:'Liberation Sans',sans-serif;letter-spacing:0.3px">PORTS</div><div class="t" style="left:992px;top:1678.3px;line-height:40px;font-size:21.6px;color:#3b3b3b;font-weight:400;font-family:'Liberation Sans',sans-serif;letter-spacing:0.3px">DEBUG CONSOLE</div><div class="a" style="left:399px;top:1719px;width:119px;height:2px;background:#3f6fb0;"></div><svg class="a" style="left:1478.0px;top:1685.0px;" width="26" height="26" viewBox="0 0 26 26" fill="none"><path d="M13 2v22M2 13h22" stroke="#333" stroke-width="2.2" stroke-linecap="round" stroke-linejoin="round"/></svg><svg class="a" style="left:1516.0px;top:1693.0px;" width="16" height="10" viewBox="0 0 16 10" fill="none"><path d="M2 2l6 6 6-6" stroke="#333" stroke-width="2.2" stroke-linecap="round" stroke-linejoin="round"/></svg><svg class="a" style="left:1556.0px;top:1694.0px;" width="26" height="8" viewBox="0 0 26 8" fill="none"><circle cx="3" cy="4" r="2.4" fill="#333"/><circle cx="13" cy="4" r="2.4" fill="#333"/><circle cx="23" cy="4" r="2.4" fill="#333"/></svg><div class="a" style="left:1608px;top:1686px;width:1px;height:26px;background:#cfcfcf;"></div><svg class="a" style="left:1635.0px;top:1695.0px;" width="24" height="6" viewBox="0 0 24 6" fill="none"><path d="M2 3h20" stroke="#333" stroke-width="2.2" stroke-linecap="round" stroke-linejoin="round"/></svg><svg class="a" style="left:1687.0px;top:1686.0px;" width="24" height="24" viewBox="0 0 24 24" fill="none"><path d="M3 3l18 18M21 3L3 21" stroke="#333" stroke-width="2.2" stroke-linecap="round" stroke-linejoin="round"/></svg><svg class="a" style="left:1739.0px;top:1686.0px;" width="24" height="24" viewBox="0 0 24 24" fill="none"><rect x="2" y="7" width="15" height="15" rx="3" stroke="#333" stroke-width="2.2" stroke-linecap="round" stroke-linejoin="round"/><path d="M7 7V5a3 3 0 0 1 3-3h9a3 3 0 0 1 3 3v9a3 3 0 0 1-3 3h-2" stroke="#333" stroke-width="2.2" stroke-linecap="round" stroke-linejoin="round"/></svg><svg class="a" style="left:1789.0px;top:1684.0px;" width="28" height="28" viewBox="0 0 28 28" fill="none"><rect x="2" y="2" width="24" height="24" rx="5" stroke="#333" stroke-width="2.2" stroke-linecap="round" stroke-linejoin="round"/></svg><div class="a" style="left:208px;top:1731px;width:1374px;height:422px;background:#ffffff;"></div><div class="a" style="left:1582px;top:1731px;width:28px;height:422px;background:#ffffff;"></div><div class="a" style="left:1582px;top:1733px;width:1px;height:420px;background:#ececec;"></div><div class="a" style="left:1584px;top:1734px;width:9px;height:9px;background:#c4c4c4;"></div><div class="a" style="left:1610px;top:1731px;width:241px;height:422px;background:#f8f8f8;"></div><div class="a" style="left:1610px;top:1731px;width:1px;height:422px;background:#e6e6e6;"></div><div class="a" style="left:1610px;top:1732px;width:241px;height:1px;background:#e6e6e6;"></div><svg class="a" style="left:1632.0px;top:1742.0px;" width="30" height="28" viewBox="0 0 30 28" fill="none"><rect x="2" y="2" width="26" height="24" rx="4" stroke="#333" stroke-width="2.2"/><path d="M8 9l6 5-6 5M15 20h8" stroke="#333" stroke-width="2.2" stroke-linecap="round"/></svg><div class="t" style="left:1671px;top:1736.0px;line-height:40px;font-size:25px;color:#333;font-weight:400;font-family:'Liberation Sans',sans-serif;">Quarto Ren...</div><div class="a" style="left:1611px;top:1778px;width:240px;height:43px;background:#e4e8f2;"></div><div class="a" style="left:1611px;top:1778px;width:2px;height:43px;background:#4a78ad;"></div><svg class="a" style="left:1632.0px;top:1786.0px;" width="30" height="28" viewBox="0 0 30 28" fill="none"><rect x="2" y="2" width="26" height="24" rx="4" stroke="#333" stroke-width="2.2"/><path d="M8 9l6 5-6 5M15 20h8" stroke="#333" stroke-width="2.2" stroke-linecap="round"/></svg><div class="t" style="left:1671px;top:1780.0px;line-height:40px;font-size:25px;color:#333;font-weight:400;font-family:'Liberation Sans',sans-serif;">Quarto Pre...</div><div class="term" style="left:249px;top:1791.2px">  respect-user-color-scheme: true</div><div class="term" style="left:249px;top:1819.2px">  theme:</div><div class="term" style="left:249px;top:1847.2px">    - cosmo</div><div class="term" style="left:249px;top:1875.2px">    - brand</div><div class="term" style="left:249px;top:1903.2px">  hide-description: true</div><div class="term" style="left:249px;top:1931.2px">  title: &quot;[2]{.chapter-number}\_ [Positron]{.chapter-title}&quot;</div><div class="term" style="left:249px;top:1987.2px">Output created: docs/Positron.html</div><div class="term" style="left:249px;top:2043.2px"><span style="color:#2f8a2a">Watching files for changes</span></div><div class="term" style="left:249px;top:2071.2px"><span style="color:#2f8a2a">GET: /Positron.html</span></div><div class="term" style="left:249px;top:2099.2px"><span style="color:#2f8a2a">GET: /Positron.html</span></div><div class="a" style="left:208px;top:1731px;width:1374px;height:56px;background:#fff;box-shadow:0 2px 3px rgba(0,0,0,0.12)"></div><div class="term" style="left:249px;top:1730.2px">rodney @ <span style="color:#555">MacStudio.local</span> <span style="color:#cd3131">➜</span>  <span style="color:#2a7ea6;font-weight:700">applied_population_genetics</span>  quarto preview /Users/r</div><div class="term" style="left:249px;top:1758.2px">odney/Desktop/applied_population_genetics/R.qmd --no-browser --no-watch-inputs</div><div class="a" style="left:1852px;top:202px;width:1608px;height:67px;background:#f8f8f8;"></div><div class="t" style="left:1893px;top:215.0px;line-height:40px;font-size:21.6px;color:#2b2b2b;font-weight:400;font-family:'Liberation Sans',sans-serif;letter-spacing:0.3px">SESSION</div><div class="t" style="left:2036px;top:215.0px;line-height:40px;font-size:21.6px;color:#2b2b2b;font-weight:400;font-family:'Liberation Sans',sans-serif;letter-spacing:0.3px">CONNECTIONS</div><div class="t" style="left:2246px;top:215.0px;line-height:40px;font-size:21.6px;color:#2b2b2b;font-weight:400;font-family:'Liberation Sans',sans-serif;letter-spacing:0.3px">HELP</div><div class="t" style="left:2352px;top:215.0px;line-height:40px;font-size:21.6px;color:#2b2b2b;font-weight:400;font-family:'Liberation Sans',sans-serif;letter-spacing:0.3px">VIEWER</div><div class="a" style="left:2346px;top:256px;width:91px;height:2px;background:#3f6fb0;"></div><svg class="a" style="left:3346.0px;top:220.0px;" width="28" height="28" viewBox="0 0 28 28" fill="none"><path d="M2 9V2h7M19 2h7v7M26 19v7h-7M9 26H2v-7" stroke="#333" stroke-width="2.2" stroke-linecap="round" stroke-linejoin="round"/></svg><svg class="a" style="left:3400.0px;top:222.0px;" width="24" height="24" viewBox="0 0 24 24" fill="none"><path d="M3 3l18 18M21 3L3 21" stroke="#333" stroke-width="2.2" stroke-linecap="round" stroke-linejoin="round"/></svg><div class="a" style="left:1852px;top:269px;width:1608px;height:57px;background:#ffffff;"></div><svg class="a" style="left:1886.0px;top:285.0px;" width="28" height="24" viewBox="0 0 28 24" fill="none"><path d="M26 12H3M12 3l-9 9 9 9" stroke="#333" stroke-width="2.2" stroke-linecap="round" stroke-linejoin="round"/></svg><svg class="a" style="left:1938.0px;top:285.0px;" width="28" height="24" viewBox="0 0 28 24" fill="none"><path d="M2 12h23M16 3l9 9-9 9" stroke="#333" stroke-width="2.2" stroke-linecap="round" stroke-linejoin="round"/></svg><svg class="a" style="left:1989.0px;top:283.0px;" width="28" height="28" viewBox="0 0 28 28" fill="none"><path d="M22 8a11 11 0 1 1-9-4" stroke="#333" stroke-width="2.2" stroke-linecap="round" stroke-linejoin="round"/><path d="M10 2h5v5" stroke="#333" stroke-width="2.2" stroke-linecap="round" stroke-linejoin="round"/></svg><div class="t" style="left:2043px;top:277.0px;line-height:40px;font-size:25.5px;color:#2b2b2b;font-weight:400;font-family:'Liberation Sans',sans-serif;">http://localhost:3526/Positron.html</div><div class="t" style="left:3174px;top:277.0px;line-height:40px;font-size:25.5px;color:#2b2b2b;font-weight:400;font-family:'Liberation Sans',sans-serif;">Zoom: (Auto)</div><svg class="a" style="left:3337.0px;top:291.0px;" width="20" height="12" viewBox="0 0 20 12" fill="none"><path d="M2 2l8 8 8-8" stroke="#333" stroke-width="2.2" stroke-linecap="round" stroke-linejoin="round"/></svg><svg class="a" style="left:3389.0px;top:282.0px;" width="30" height="30" viewBox="0 0 30 30" fill="none"><path d="M13 3H3v24h24V17M18 3h9v9M27 3L14 16" stroke="#333" stroke-width="2.2" stroke-linecap="round" stroke-linejoin="round"/></svg><div class="a" style="left:1852px;top:326px;width:1608px;height:1827px;overflow:hidden;background:#fff"><div class="a" style="left:-1852px;top:-326px;width:3572px;height:2346px"><div class="t" style="left:1922px;top:374.5px;line-height:41px;font-size:31.5px;color:#343a40;font-weight:400;font-family:'Liberation Sans',sans-serif;">Applied</div><div class="t" style="left:1922px;top:415.5px;line-height:41px;font-size:31.5px;color:#343a40;font-weight:400;font-family:'Liberation Sans',sans-serif;">Population</div><div class="t" style="left:1922px;top:456.5px;line-height:41px;font-size:31.5px;color:#343a40;font-weight:400;font-family:'Liberation Sans',sans-serif;">Genetics</div><svg class="a" style="left:2057.0px;top:463.0px;" width="24" height="24" viewBox="0 0 24 24" fill="none"><path d="M12 1a11 11 0 0 0-3.5 21.4c.6.1.8-.2.8-.5v-2c-3 .7-3.7-1.4-3.7-1.4-.5-1.3-1.2-1.6-1.2-1.6-1-.7.1-.7.1-.7 1.1.1 1.7 1.1 1.7 1.1 1 1.7 2.6 1.2 3.2.9.1-.7.4-1.2.7-1.5-2.4-.3-5-1.2-5-5.4 0-1.2.4-2.2 1.1-2.9-.1-.3-.5-1.4.1-2.9 0 0 .9-.3 3 1.1a10 10 0 0 1 5.4 0c2.1-1.4 3-1.1 3-1.1.6 1.5.2 2.6.1 2.9.7.8 1.1 1.7 1.1 2.9 0 4.2-2.6 5.1-5 5.4.4.3.7 1 .7 2v3c0 .3.2.6.8.5A11 11 0 0 0 12 1z" fill="#595959"/></svg><div class="a" style="left:1922px;top:536px;width:246px;height:41px;border:1px solid #dee2e6;border-radius:6px"></div><svg class="a" style="left:1935.0px;top:546.0px;" width="22" height="22" viewBox="0 0 22 22" fill="none"><circle cx="9" cy="9" r="7" stroke="#888" stroke-width="2"/><path d="M14 14l6 6" stroke="#888" stroke-width="2"/></svg><div class="t" style="left:1922px;top:610.0px;line-height:40px;font-size:22.5px;color:#595959;font-weight:400;font-family:'Liberation Sans',sans-serif;">Preface</div><div class="t" style="left:1922px;top:646.0px;line-height:40px;font-size:22.5px;color:#595959;font-weight:400;font-family:'Liberation Sans',sans-serif;">Introduction</div><div class="t" style="left:1922px;top:683.0px;line-height:40px;font-size:22.5px;color:#595959;font-weight:400;font-family:'Liberation Sans',sans-serif;">R Language</div><div class="t" style="left:1922px;top:709.0px;line-height:40px;font-size:22.5px;color:#595959;font-weight:400;font-family:'Liberation Sans',sans-serif;">Ecosystem</div><div class="t" style="left:1922px;top:1155.0px;line-height:40px;font-size:22.5px;color:#595959;font-weight:400;font-family:'Liberation Sans',sans-serif;">Backmatter</div><div class="t" style="left:1922px;top:1276.0px;line-height:40px;font-size:22.5px;color:#595959;font-weight:400;font-family:'Liberation Sans',sans-serif;">Appendices</div><svg class="a" style="left:2152.0px;top:698.0px;" width="20" height="12" viewBox="0 0 20 12" fill="none"><path d="M2 2l8 8 8-8" stroke="#666" stroke-width="2"/></svg><svg class="a" style="left:2152.0px;top:1170.0px;" width="20" height="12" viewBox="0 0 20 12" fill="none"><path d="M2 2l8 8 8-8" stroke="#666" stroke-width="2"/></svg><svg class="a" style="left:2152.0px;top:1291.0px;" width="20" height="12" viewBox="0 0 20 12" fill="none"><path d="M2 2l8 8 8-8" stroke="#666" stroke-width="2"/></svg><div class="t" style="left:1934px;top:746.0px;line-height:40px;font-size:21.5px;color:#595959;font-weight:400;font-family:'Liberation Sans',sans-serif;">1</div><div class="t" style="left:1954px;top:746.0px;line-height:40px;font-size:21.5px;color:#595959;font-weight:400;font-family:'Liberation Sans',sans-serif;">Getting R</div><div class="t" style="left:1934px;top:781.5px;line-height:40px;font-size:21.5px;color:#3c63d6;font-weight:400;font-family:'Liberation Sans',sans-serif;">2</div><div class="t" style="left:1954px;top:781.5px;line-height:40px;font-size:21.5px;color:#3c63d6;font-weight:400;font-family:'Liberation Sans',sans-serif;">Positron</div><div class="t" style="left:1934px;top:818.5px;line-height:40px;font-size:21.5px;color:#595959;font-weight:400;font-family:'Liberation Sans',sans-serif;">3</div><div class="t" style="left:1954px;top:818.5px;line-height:40px;font-size:21.5px;color:#595959;font-weight:400;font-family:'Liberation Sans',sans-serif;">Markdown</div><div class="t" style="left:1934px;top:854.5px;line-height:40px;font-size:21.5px;color:#595959;font-weight:400;font-family:'Liberation Sans',sans-serif;">4</div><div class="t" style="left:1954px;top:854.5px;line-height:40px;font-size:21.5px;color:#595959;font-weight:400;font-family:'Liberation Sans',sans-serif;">Data Types</div><div class="t" style="left:1934px;top:891.0px;line-height:40px;font-size:21.5px;color:#595959;font-weight:400;font-family:'Liberation Sans',sans-serif;">5</div><div class="t" style="left:1954px;top:891.0px;line-height:40px;font-size:21.5px;color:#595959;font-weight:400;font-family:'Liberation Sans',sans-serif;">Data Containers</div><div class="t" style="left:1934px;top:927.0px;line-height:40px;font-size:21.5px;color:#595959;font-weight:400;font-family:'Liberation Sans',sans-serif;">6</div><div class="t" style="left:1954px;top:927.0px;line-height:40px;font-size:21.5px;color:#595959;font-weight:400;font-family:'Liberation Sans',sans-serif;">Factor Data</div><div class="t" style="left:1934px;top:963.0px;line-height:40px;font-size:21.5px;color:#595959;font-weight:400;font-family:'Liberation Sans',sans-serif;">7</div><div class="t" style="left:1954px;top:963.0px;line-height:40px;font-size:21.5px;color:#595959;font-weight:400;font-family:'Liberation Sans',sans-serif;">Tidyverse</div><div class="t" style="left:1934px;top:1000.0px;line-height:40px;font-size:21.5px;color:#595959;font-weight:400;font-family:'Liberation Sans',sans-serif;">8</div><div class="t" style="left:1954px;top:1000.0px;line-height:40px;font-size:21.5px;color:#595959;font-weight:400;font-family:'Liberation Sans',sans-serif;">Tabular Data</div><div class="t" style="left:1934px;top:1036.0px;line-height:40px;font-size:21.5px;color:#595959;font-weight:400;font-family:'Liberation Sans',sans-serif;">9</div><div class="t" style="left:1954px;top:1036.0px;line-height:40px;font-size:21.5px;color:#595959;font-weight:400;font-family:'Liberation Sans',sans-serif;">Graphics</div><div class="t" style="left:1934px;top:1073.0px;line-height:40px;font-size:21.5px;color:#595959;font-weight:400;font-family:'Liberation Sans',sans-serif;">10</div><div class="t" style="left:1966px;top:1073.0px;line-height:40px;font-size:21.5px;color:#595959;font-weight:400;font-family:'Liberation Sans',sans-serif;">Functions</div><div class="t" style="left:1934px;top:1110.0px;line-height:40px;font-size:21.5px;color:#595959;font-weight:400;font-family:'Liberation Sans',sans-serif;">11</div><div class="t" style="left:1966px;top:1110.0px;line-height:40px;font-size:21.5px;color:#595959;font-weight:400;font-family:'Liberation Sans',sans-serif;">Publishing</div><div class="t" style="left:1934px;top:1194.0px;line-height:40px;font-size:21.5px;color:#595959;font-weight:400;font-family:'Liberation Sans',sans-serif;">12</div><div class="t" style="left:1966px;top:1194.0px;line-height:40px;font-size:21.5px;color:#595959;font-weight:400;font-family:'Liberation Sans',sans-serif;">Summary</div><div class="t" style="left:1934px;top:1315.0px;line-height:40px;font-size:21.5px;color:#595959;font-weight:400;font-family:'Liberation Sans',sans-serif;">A</div><div class="t" style="left:1954px;top:1315.0px;line-height:40px;font-size:21.5px;color:#595959;font-weight:400;font-family:'Liberation Sans',sans-serif;">Data Sets</div><div class="t" style="left:1934px;top:1352.0px;line-height:40px;font-size:21.5px;color:#595959;font-weight:400;font-family:'Liberation Sans',sans-serif;">B</div><div class="t" style="left:1954px;top:1352.0px;line-height:40px;font-size:21.5px;color:#595959;font-weight:400;font-family:'Liberation Sans',sans-serif;">Bloom Spread</div><div class="t" style="left:1934px;top:1231.0px;line-height:40px;font-size:21.5px;color:#595959;font-weight:400;font-family:'Liberation Sans',sans-serif;">References</div><div class="t" style="left:2236px;top:361.0px;line-height:40px;font-size:21.2px;color:#6c757d;font-weight:400;font-family:'Liberation Sans',sans-serif;"><span style="color:#3c63d6">R Language Ecosystem</span> <span style="color:#6c757d">&gt; 2&nbsp; Positron</span></div><div class="t" style="left:2236px;top:410.0px;line-height:60px;font-size:44px;color:#343a40;font-weight:700;font-family:'Liberation Sans',sans-serif;">2&nbsp; Positron</div><svg class="a" style="left:2236px;top:493px" width="840" height="631" viewBox="0 0 840 631">
<defs>
<linearGradient id="sky" x1="0" y1="0" x2="0" y2="1"><stop offset="0" stop-color="#aec7ea"/><stop offset="0.4" stop-color="#c5d5ec"/><stop offset="0.64" stop-color="#d3dae6"/></linearGradient>
<linearGradient id="sand" x1="0" y1="0" x2="0" y2="1"><stop offset="0" stop-color="#c8b49c"/><stop offset="0.4" stop-color="#b59f8a"/><stop offset="1" stop-color="#957866"/></linearGradient>
<linearGradient id="body" x1="0" y1="0" x2="1" y2="0.3"><stop offset="0" stop-color="#b08a68"/><stop offset="0.55" stop-color="#a47c5b"/><stop offset="1" stop-color="#7c5c46"/></linearGradient>
<linearGradient id="head" x1="0" y1="0" x2="0.3" y2="1"><stop offset="0" stop-color="#a89684"/><stop offset="0.6" stop-color="#ab9680"/><stop offset="1" stop-color="#8f7b6a"/></linearGradient>
<filter id="b8" x="-30%" y="-30%" width="160%" height="160%"><feGaussianBlur stdDeviation="8"/></filter>
<filter id="b4" x="-30%" y="-30%" width="160%" height="160%"><feGaussianBlur stdDeviation="4"/></filter>
<filter id="b2" x="-10%" y="-10%" width="120%" height="120%"><feGaussianBlur stdDeviation="1.5"/></filter>
</defs>
<rect width="840" height="631" fill="url(#sky)"/>
<g filter="url(#b8)" opacity="0.5" fill="#e8eef6">
<ellipse cx="600" cy="60" rx="60" ry="18"/><ellipse cx="760" cy="40" rx="50" ry="15"/><ellipse cx="700" cy="150" rx="90" ry="25"/><ellipse cx="640" cy="230" rx="100" ry="25"/><ellipse cx="200" cy="30" rx="60" ry="15"/>
</g>
<rect y="398" width="460" height="30" fill="#98a8b6"/>
<g fill="#e6ecef" filter="url(#b2)"><ellipse cx="70" cy="410" rx="40" ry="3"/><ellipse cx="230" cy="408" rx="60" ry="2.5"/></g>
<rect y="424" width="840" height="207" fill="url(#sand)"/>
<g filter="url(#b4)" fill="none"><path d="M12 105Q31 44 46 52" stroke="#6f8c78" stroke-width="28" stroke-linecap="round" opacity="0.75"/><path d="M12 105Q31 44 46 52" stroke="#56704e" stroke-width="3" opacity="0.5"/><path d="M12 105Q76 24 129 54" stroke="#6f8c78" stroke-width="28" stroke-linecap="round" opacity="0.75"/><path d="M12 105Q76 24 129 54" stroke="#56704e" stroke-width="3" opacity="0.5"/><path d="M12 105Q100 52 173 109" stroke="#6f8c78" stroke-width="28" stroke-linecap="round" opacity="0.75"/><path d="M12 105Q100 52 173 109" stroke="#56704e" stroke-width="3" opacity="0.5"/><path d="M12 105Q102 81 176 157" stroke="#6f8c78" stroke-width="28" stroke-linecap="round" opacity="0.75"/><path d="M12 105Q102 81 176 157" stroke="#56704e" stroke-width="3" opacity="0.5"/><path d="M12 105Q91 111 155 203" stroke="#6f8c78" stroke-width="28" stroke-linecap="round" opacity="0.75"/><path d="M12 105Q91 111 155 203" stroke="#56704e" stroke-width="3" opacity="0.5"/><path d="M12 105Q71 133 120 234" stroke="#6f8c78" stroke-width="28" stroke-linecap="round" opacity="0.75"/><path d="M12 105Q71 133 120 234" stroke="#56704e" stroke-width="3" opacity="0.5"/><path d="M12 105Q39 142 62 230" stroke="#6f8c78" stroke-width="28" stroke-linecap="round" opacity="0.75"/><path d="M12 105Q39 142 62 230" stroke="#56704e" stroke-width="3" opacity="0.5"/><path d="M191 262Q159 195 133 196" stroke="#76935f" stroke-width="30" stroke-linecap="round" opacity="0.78"/><path d="M191 262Q159 195 133 196" stroke="#56704e" stroke-width="3" opacity="0.5"/><path d="M191 262Q186 195 182 190" stroke="#76935f" stroke-width="30" stroke-linecap="round" opacity="0.78"/><path d="M191 262Q186 195 182 190" stroke="#56704e" stroke-width="3" opacity="0.5"/><path d="M191 262Q213 190 231 187" stroke="#76935f" stroke-width="30" stroke-linecap="round" opacity="0.78"/><path d="M191 262Q213 190 231 187" stroke="#56704e" stroke-width="3" opacity="0.5"/><path d="M191 262Q240 209 281 222" stroke="#76935f" stroke-width="30" stroke-linecap="round" opacity="0.78"/><path d="M191 262Q240 209 281 222" stroke="#56704e" stroke-width="3" opacity="0.5"/><path d="M191 262Q254 239 306 277" stroke="#76935f" stroke-width="30" stroke-linecap="round" opacity="0.78"/><path d="M191 262Q254 239 306 277" stroke="#56704e" stroke-width="3" opacity="0.5"/><path d="M191 262Q144 219 106 234" stroke="#76935f" stroke-width="30" stroke-linecap="round" opacity="0.78"/><path d="M191 262Q144 219 106 234" stroke="#56704e" stroke-width="3" opacity="0.5"/><path d="M191 262Q122 230 65 267" stroke="#76935f" stroke-width="30" stroke-linecap="round" opacity="0.78"/><path d="M191 262Q122 230 65 267" stroke="#56704e" stroke-width="3" opacity="0.5"/><path d="M191 262Q114 261 50 330" stroke="#76935f" stroke-width="30" stroke-linecap="round" opacity="0.78"/><path d="M191 262Q114 261 50 330" stroke="#56704e" stroke-width="3" opacity="0.5"/><path d="M191 262Q144 284 106 353" stroke="#76935f" stroke-width="30" stroke-linecap="round" opacity="0.78"/><path d="M191 262Q144 284 106 353" stroke="#56704e" stroke-width="3" opacity="0.5"/><path d="M191 262Q245 271 289 329" stroke="#76935f" stroke-width="30" stroke-linecap="round" opacity="0.78"/><path d="M191 262Q245 271 289 329" stroke="#56704e" stroke-width="3" opacity="0.5"/><path d="M191 262Q224 282 251 336" stroke="#76935f" stroke-width="30" stroke-linecap="round" opacity="0.78"/><path d="M191 262Q224 282 251 336" stroke="#56704e" stroke-width="3" opacity="0.5"/><path d="M191 262Q173 286 158 338" stroke="#76935f" stroke-width="30" stroke-linecap="round" opacity="0.78"/><path d="M191 262Q173 286 158 338" stroke="#56704e" stroke-width="3" opacity="0.5"/><path d="M262 230Q255 184 249 177" stroke="#7a9764" stroke-width="24" stroke-linecap="round" opacity="0.75"/><path d="M262 230Q255 184 249 177" stroke="#56704e" stroke-width="3" opacity="0.5"/><path d="M262 230Q284 183 302 180" stroke="#7a9764" stroke-width="24" stroke-linecap="round" opacity="0.75"/><path d="M262 230Q284 183 302 180" stroke="#56704e" stroke-width="3" opacity="0.5"/><path d="M262 230Q299 209 330 223" stroke="#7a9764" stroke-width="24" stroke-linecap="round" opacity="0.75"/><path d="M262 230Q299 209 330 223" stroke="#56704e" stroke-width="3" opacity="0.5"/><path d="M262 230Q232 206 207 214" stroke="#7a9764" stroke-width="24" stroke-linecap="round" opacity="0.75"/><path d="M262 230Q232 206 207 214" stroke="#56704e" stroke-width="3" opacity="0.5"/><path d="M262 230Q291 230 315 253" stroke="#7a9764" stroke-width="24" stroke-linecap="round" opacity="0.75"/><path d="M262 230Q291 230 315 253" stroke="#56704e" stroke-width="3" opacity="0.5"/><path d="M262 230Q281 241 296 270" stroke="#7a9764" stroke-width="24" stroke-linecap="round" opacity="0.75"/><path d="M262 230Q281 241 296 270" stroke="#56704e" stroke-width="3" opacity="0.5"/><path d="M520 235Q488 168 462 163" stroke="#98b27c" stroke-width="34" stroke-linecap="round" opacity="0.82"/><path d="M520 235Q488 168 462 163" stroke="#56704e" stroke-width="3" opacity="0.5"/><path d="M520 235Q514 151 509 138" stroke="#98b27c" stroke-width="34" stroke-linecap="round" opacity="0.82"/><path d="M520 235Q514 151 509 138" stroke="#56704e" stroke-width="3" opacity="0.5"/><path d="M520 235Q542 163 560 154" stroke="#98b27c" stroke-width="34" stroke-linecap="round" opacity="0.82"/><path d="M520 235Q542 163 560 154" stroke="#56704e" stroke-width="3" opacity="0.5"/><path d="M520 235Q560 184 594 187" stroke="#98b27c" stroke-width="34" stroke-linecap="round" opacity="0.82"/><path d="M520 235Q560 184 594 187" stroke="#56704e" stroke-width="3" opacity="0.5"/><path d="M520 235Q574 205 618 225" stroke="#98b27c" stroke-width="34" stroke-linecap="round" opacity="0.82"/><path d="M520 235Q574 205 618 225" stroke="#56704e" stroke-width="3" opacity="0.5"/><path d="M520 235Q576 235 622 279" stroke="#98b27c" stroke-width="34" stroke-linecap="round" opacity="0.82"/><path d="M520 235Q576 235 622 279" stroke="#56704e" stroke-width="3" opacity="0.5"/><path d="M520 235Q564 261 600 328" stroke="#98b27c" stroke-width="34" stroke-linecap="round" opacity="0.82"/><path d="M520 235Q564 261 600 328" stroke="#56704e" stroke-width="3" opacity="0.5"/><path d="M520 235Q541 271 558 340" stroke="#98b27c" stroke-width="34" stroke-linecap="round" opacity="0.82"/><path d="M520 235Q541 271 558 340" stroke="#56704e" stroke-width="3" opacity="0.5"/><path d="M520 235Q483 206 452 216" stroke="#98b27c" stroke-width="34" stroke-linecap="round" opacity="0.82"/><path d="M520 235Q483 206 452 216" stroke="#56704e" stroke-width="3" opacity="0.5"/><path d="M320 190Q297 172 278 176" stroke="#88a275" stroke-width="24" stroke-linecap="round" opacity="0.75"/><path d="M320 190Q297 172 278 176" stroke="#56704e" stroke-width="3" opacity="0.5"/><path d="M320 190Q307 162 296 158" stroke="#88a275" stroke-width="24" stroke-linecap="round" opacity="0.75"/><path d="M320 190Q307 162 296 158" stroke="#56704e" stroke-width="3" opacity="0.5"/><path d="M320 190Q320 164 320 158" stroke="#88a275" stroke-width="24" stroke-linecap="round" opacity="0.75"/><path d="M320 190Q320 164 320 158" stroke="#56704e" stroke-width="3" opacity="0.5"/><path d="M320 190Q298 186 280 198" stroke="#88a275" stroke-width="24" stroke-linecap="round" opacity="0.75"/><path d="M320 190Q298 186 280 198" stroke="#56704e" stroke-width="3" opacity="0.5"/><path d="M320 190Q299 194 282 212" stroke="#88a275" stroke-width="24" stroke-linecap="round" opacity="0.75"/><path d="M320 190Q299 194 282 212" stroke="#56704e" stroke-width="3" opacity="0.5"/></g>
<path d="M190 428h140v18H190z" fill="#8e9f70" filter="url(#b4)"/>
<g stroke="#7b6b5a" stroke-linecap="round"><path d="M105 315L99 456" stroke-width="8"/><path d="M200 315L183 461" stroke-width="10"/><path d="M255 315L243 452" stroke-width="7"/><path d="M452 400L452 470" stroke-width="8"/></g>
<path d="M0 480L150 476 140 510 120 545 90 590 67 631H0z" fill="#86807c" filter="url(#b2)"/><path d="M0 470L154 473 150 490 0 500z" fill="#a39a90" filter="url(#b4)"/>
<g stroke="#c8b8a6" stroke-width="3" fill="none" opacity="0.7"><path d="M0 520L120 545M0 575L90 590M40 480L140 510"/></g>
<ellipse cx="330" cy="605" rx="140" ry="40" fill="#8d6c5a" filter="url(#b8)"/>
<path d="M385 505h100v60H385z" fill="#b6ada2" filter="url(#b2)"/>
<path d="M734 335L840 252V385L734 382z" fill="#85868a" filter="url(#b2)"/><g stroke="#80776b" stroke-width="7"><path d="M708 322V372M728 330V372"/></g><g fill="#8f9a88" opacity="0.5" filter="url(#b4)"><ellipse cx="700" cy="345" rx="22" ry="30"/></g>
<g stroke="#2f4638" stroke-width="3.4" fill="none" opacity="0.9" stroke-linecap="round"><path d="M343 0Q356 25 362 50M368 0Q383 31 390 62M393 0Q408 26 414 52M452 0Q467 41 474 82M470 0Q489 56 500 112M488 0Q508 64 520 128M508 0Q530 64 545 128M528 0Q551 61 566 122M548 0Q571 58 586 116M568 0Q589 51 602 102M592 0Q608 45 616 90M612 0Q624 30 627 60M630 0Q640 20 641 40M646 0Q655 11 656 22"/></g>
<g filter="url(#b2)"><path d="M440 175 L466 175 L500 200 L540 230 L580 270 L610 310 L640 340 L683 366 L760 375 L840 382 L840 631 L529 631 L500 570 L470 500 L440 430 L440 175Z" fill="url(#body)"/><path d="M450 0 L470 60 L472 120 L466 175 L470 230 L475 290 L470 350 L455 400 L446 430 L420 450 L395 475 L370 500 L350 522 L330 528 L305 520 L283 505 L266 482 L260 458 L266 430 L278 395 L290 350 L298 300 L302 256 L318 220 L340 197 L338 150 L332 100 L334 58 L345 65 L360 90 L380 130 L395 161 L402 160 L406 120 L410 60 L418 0Z" fill="url(#head)"/></g>
<path d="M418 0L450 0 470 60 472 120 466 175 402 160 406 120 410 60z" fill="#a08066" opacity="0.55" filter="url(#b2)"/>
<g filter="url(#b4)">
<path d="M430 15C440 60 450 110 448 150" stroke="#3e3028" stroke-width="14" fill="none"/>
<path d="M338 68C345 90 350 110 352 130" stroke="#6d5d50" stroke-width="10" fill="none"/>
<path d="M472 190C520 220 570 270 615 325" stroke="#6c4a35" stroke-width="26" fill="none"/>
<path d="M655 345C665 380 668 420 660 460" stroke="#5e4232" stroke-width="10" fill="none"/>
<ellipse cx="790" cy="560" rx="90" ry="140" fill="#6a4f3f" opacity="0.55"/>
<ellipse cx="316" cy="470" rx="20" ry="16" fill="#5e4d44" opacity="0.75"/><path d="M290 505C310 520 340 525 360 505" stroke="#6a5848" stroke-width="6" fill="none" opacity="0.6"/>
<ellipse cx="560" cy="560" rx="60" ry="60" fill="#c49e7c" opacity="0.5"/>
</g>
<ellipse cx="404" cy="267" rx="20" ry="13" fill="#2a1d18" transform="rotate(-12 404 267)"/>
<circle cx="406" cy="262" r="2" fill="#fff"/>
</svg><div class="t" style="left:2236px;top:1150.5px;line-height:39px;font-size:24.1px;color:#3d4349;font-weight:400;font-family:'Liberation Sans',sans-serif;">Writing code in R, Python, Julia, or other languges benefit from an interface</div><div class="t" style="left:2236px;top:1189.5px;line-height:39px;font-size:24.1px;color:#3d4349;font-weight:400;font-family:'Liberation Sans',sans-serif;">and ecosystem that helps you accomplish your data analysis tasks. By default,</div><div class="t" style="left:2236px;top:1228.5px;line-height:39px;font-size:24.1px;color:#3d4349;font-weight:400;font-family:'Liberation Sans',sans-serif;">R comes with an interface that you could use to do all your work.</div><div class="a" style="left:2307px;top:1342px;width:698px;height:683px;border-radius:14px;box-shadow:0 28px 60px rgba(0,0,0,0.45)"></div><div class="a" style="left:2307px;top:1342px;width:698px;height:683px;border-radius:14px;overflow:hidden;background:#fff;border:1px solid #444;box-sizing:border-box"><div class="a" style="left:0;top:0;width:698px;height:66px;background:#636363"></div><div class="a" style="left:0;top:66px;width:698px;height:30px;background:#2e2e2e"></div><div class="a" style="left:20px;top:74px;width:331px;height:17px;border-radius:5px;background:#3a3a3a;border:1px solid #4a4a4a"></div><div class="a" style="left:415px;top:73px;width:235px;height:18px;border-radius:5px;background:#353535;border:1px solid #4e4e4e"></div><div class="a" style="left:37px;top:75px;color:#aaa;font:12px/14px 'Liberation Sans'">~</div><div class="a" style="left:447px;top:73px;color:#8c8c8c;font:14px/19px 'Liberation Sans'">Help Search</div><svg class="a" style="left:424px;top:74px" width="18" height="16"><circle cx="7" cy="7" r="5" stroke="#ccc" stroke-width="1.6" fill="none"/><path d="M11 11l4 4" stroke="#ccc" stroke-width="1.6"/></svg><div class="a" style="left:669px;top:76px;width:9px;height:9px;border-radius:50%;background:#fff"></div><div class="a" style="left:23.5px;top:25.5px;width:15px;height:15px;border-radius:50%;background:#ee6a5f"></div><div class="a" style="left:48.5px;top:25.5px;width:15px;height:15px;border-radius:50%;background:#f5bd4f"></div><div class="a" style="left:73.5px;top:25.5px;width:15px;height:15px;border-radius:50%;background:#61c454"></div><div class="a" style="left:28.5px;top:30.5px;width:5px;height:5px;border-radius:50%;background:#8f2a22"></div><div class="a" style="left:114px;top:19px;color:#e8e8e8;font:700 18.5px/26px 'Liberation Sans'">R Console</div><div class="a" style="left:325px;top:19px;width:28px;height:28px;border-radius:8px;background:#b24b4b;color:#e9a0a0;font:700 7px/28px 'Liberation Sans';text-align:center">STOP</div><svg class="a" style="left:372px;top:14px" width="40" height="38"><rect x="4" y="2" width="16" height="20" fill="#ddd"/><ellipse cx="24" cy="24" rx="14" ry="10" fill="none" stroke="#999" stroke-width="3"/><text x="16" y="34" font-family="Liberation Sans" font-weight="700" font-size="22" fill="#6b7fc6">R</text></svg><svg class="a" style="left:425px;top:14px" width="32" height="32"><rect x="1" y="1" width="30" height="30" fill="#f5df8e" stroke="#aaa"/><path d="M6 28V16M10 28V12M14 28V9M18 28V13M22 28V18M26 28V22" stroke="#3050d0" stroke-width="2.6"/></svg><svg class="a" style="left:478px;top:16px" width="20" height="30"><path d="M5 14V9a5 5 0 0 1 10 0v5" stroke="#bbb" stroke-width="2.5" fill="none"/><rect x="2" y="13" width="16" height="14" rx="2" fill="#ddd"/></svg><svg class="a" style="left:525px;top:14px" width="32" height="34"><rect x="1" y="1" width="30" height="32" fill="#6cc5e8" stroke="#aaa"/><path d="M2 8h28M2 15h28M2 22h28M2 29h28" stroke="#f3f0c8" stroke-width="3"/></svg><div class="a" style="left:580px;top:20px;width:26px;height:26px;border-radius:50%;background:conic-gradient(#f66,#fd5,#6e6,#5df,#66f,#f5f,#f66)"></div><svg class="a" style="left:664px;top:24px" width="22" height="18"><path d="M2 2l7 7-7 7M11 2l7 7-7 7" stroke="#ccc" stroke-width="2" fill="none"/></svg><pre class="a" style="margin:0;left:6px;top:116px;font:14px/19px 'Liberation Mono',monospace;color:#111">R version 4.5.2 (2025-10-31) -- &quot;[Not] Part in a Rumble&quot;
Copyright (C) 2025 The R Foundation for Statistical Computing
Platform: aarch64-apple-darwin20

R is free software and comes with ABSOLUTELY NO WARRANTY.
You are welcome to redistribute it under certain conditions.
Type &#x27;license()&#x27; or &#x27;licence()&#x27; for distribution details.

  Natural language support but running in an English locale

R is a collaborative project with many contributors.
Type &#x27;contributors()&#x27; for more information and
&#x27;citation()&#x27; on how to cite R or R packages in publications.

Type &#x27;demo()&#x27; for some demos, &#x27;help()&#x27; for on-line help, or
&#x27;help.start()&#x27; for an HTML browser interface to help.
Type &#x27;q()&#x27; to quit R.

[R.app GUI 1.82 (8536) aarch64-apple-darwin20]

[History restored from /Users/rodney/.Rapp.history]
</pre><div class="a" style="left:6px;top:534px;font:14.4px/19px 'Liberation Mono';color:#a040a0">&gt;</div><div class="a" style="left:20px;top:537px;width:2px;height:16px;background:#2040ff"></div><div class="a" style="left:0;top:658px;width:698px;height:25px;background:#2f2f2f"></div></div><div class="t" style="left:2236px;top:2134.0px;line-height:30px;font-size:22.1px;color:#6c757d;font-weight:400;font-family:'Liberation Sans',sans-serif;">Figure 2.1: The stock R application, bundled with each distribution</div><div class="t" style="left:3116px;top:343.0px;line-height:40px;font-size:21.4px;color:#41474d;font-weight:400;font-family:'Liberation Sans',sans-serif;">Table of contents</div><div class="a" style="left:3126px;top:381px;width:2px;height:67px;background:#5a7fe0;"></div><div class="t" style="left:3143px;top:381.0px;line-height:40px;font-size:21.6px;color:#3f66d8;font-weight:400;font-family:'Liberation Sans',sans-serif;">Integrated Development</div><div class="t" style="left:3143px;top:410.0px;line-height:40px;font-size:21.6px;color:#3f66d8;font-weight:400;font-family:'Liberation Sans',sans-serif;">Environment</div></div></div><div class="a" style="left:179px;top:397px;width:58px;height:44px;border-radius:22px;background:#0a80ff;box-shadow:0 0 0 1.5px #10b4ff"></div><svg class="a" style="left:193.0px;top:403.0px;" width="30" height="32" viewBox="0 0 30 32" fill="none"><path d="M15 3L4 14h6v6h10v-6h6z" stroke="#fff" stroke-width="2.6" stroke-linejoin="round"/><rect x="9" y="24" width="12" height="5" rx="1" stroke="#fff" stroke-width="2.4"/></svg></div></div></body></html>
